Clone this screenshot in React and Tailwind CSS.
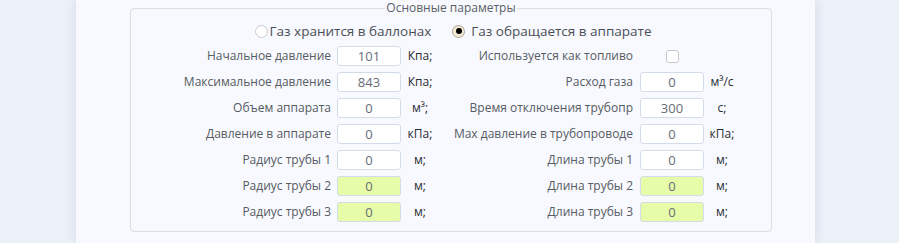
const FONT = { fontFamily: '"Open Sans", "Noto Sans", sans-serif' };

const rows = [
  {
    left: ["Начальное давление", "101", "Кпа;"],
    right: { type: "check", label: "Используется как топливо" },
  },
  {
    left: ["Максимальное давление", "843", "Кпа;"],
    right: { label: "Расход газа", value: "0", unit: "м³/с" },
  },
  {
    left: ["Объем аппарата", "0", "м³;"],
    right: { label: "Время отключения трубопр", value: "300", unit: "с;" },
  },
  {
    left: ["Давление в аппарате", "0", "кПа;"],
    right: { label: "Мах давление в трубопроводе", value: "0", unit: "кПа;" },
  },
  {
    left: ["Радиус трубы 1", "0", "м;"],
    right: { label: "Длина трубы 1", value: "0", unit: "м;" },
  },
  {
    left: ["Радиус трубы 2", "0", "м;", true],
    right: { label: "Длина трубы 2", value: "0", unit: "м;", green: true },
  },
  {
    left: ["Радиус трубы 3", "0", "м;", true],
    right: { label: "Длина трубы 3", value: "0", unit: "м;", green: true },
  },
];

function Field({ value, green }) {
  return (
    <input
      readOnly
      value={value}
      className={`h-[20px] w-[64px] rounded-[3px] border border-[#d3dde9] text-center text-[13px] text-[#666d78] outline-none ${
        green ? "bg-[#e6fca8]" : "bg-white"
      }`}
      style={FONT}
    />
  );
}

function Radio({ checked, label, gap }) {
  return (
    <label className={`flex items-center whitespace-nowrap text-[13.5px] text-[#4a4f57] ${gap}`}>
      <span
        className={`grid h-[13px] w-[13px] place-items-center rounded-full border ${
          checked ? "border-[#a9a49a] bg-[#f3ead3]" : "border-[#c8ccd2] bg-white"
        }`}
      >
        {checked && <span className="h-[6px] w-[6px] rounded-full bg-black" />}
      </span>
      {label}
    </label>
  );
}

export default function App() {
  return (
    <div className="h-[243px] overflow-hidden bg-[#ecf0f8]" style={FONT}>
      <div className="ml-[76px] h-full w-[739px] bg-[#f8f9fe] pl-[54px] pt-[1px] shadow-[0_0_10px_rgba(40,60,100,0.12)]">
        <fieldset className="w-[642px] rounded-[4px] border border-[#d6dfea] pb-[6px] pt-[4px]">
          <legend className="mx-auto px-[1px] text-[12px] leading-[14px] text-[#5a5f66]">
            Основные параметры
          </legend>
          <div className="flex h-[24px] items-center justify-center gap-[21px] pl-[4px]">
            <Radio label="Газ хранится в баллонах" gap="gap-[2px]" />
            <Radio checked label="Газ обращается в аппарате" gap="gap-[6px]" />
          </div>
          <div className="grid grid-cols-[206px_64px_38px_201px_64px_36px] whitespace-nowrap text-[12px]">
            {rows.map(({ left, right }, i) => (
              <div key={i} className="contents">
                <div className="flex h-[26px] items-center justify-end pr-[6px] text-[#555b63]">
                  {left[0]}
                </div>
                <div className="flex items-center">
                  <Field value={left[1]} green={left[3]} />
                </div>
                <div className="flex items-center justify-center text-[#2a2d33]">{left[2]}</div>
                {right.type === "check" ? (
                  <>
                    <div className="flex items-center justify-end pr-[7px] text-[#555b63]">
                      {right.label}
                    </div>
                    <div className="flex items-center justify-center">
                      <span className="h-[13px] w-[13px] rounded-[3px] border border-[#c5c9cf] bg-white" />
                    </div>
                    <div />
                  </>
                ) : (
                  <>
                    <div className="flex items-center justify-end pr-[7px] text-[#555b63]">
                      {right.label}
                    </div>
                    <div className="flex items-center">
                      <Field value={right.value} green={right.green} />
                    </div>
                    <div className="flex items-center justify-center text-[#2a2d33]">{right.unit}</div>
                  </>
                )}
              </div>
            ))}
          </div>
        </fieldset>
      </div>
    </div>
  );
}
